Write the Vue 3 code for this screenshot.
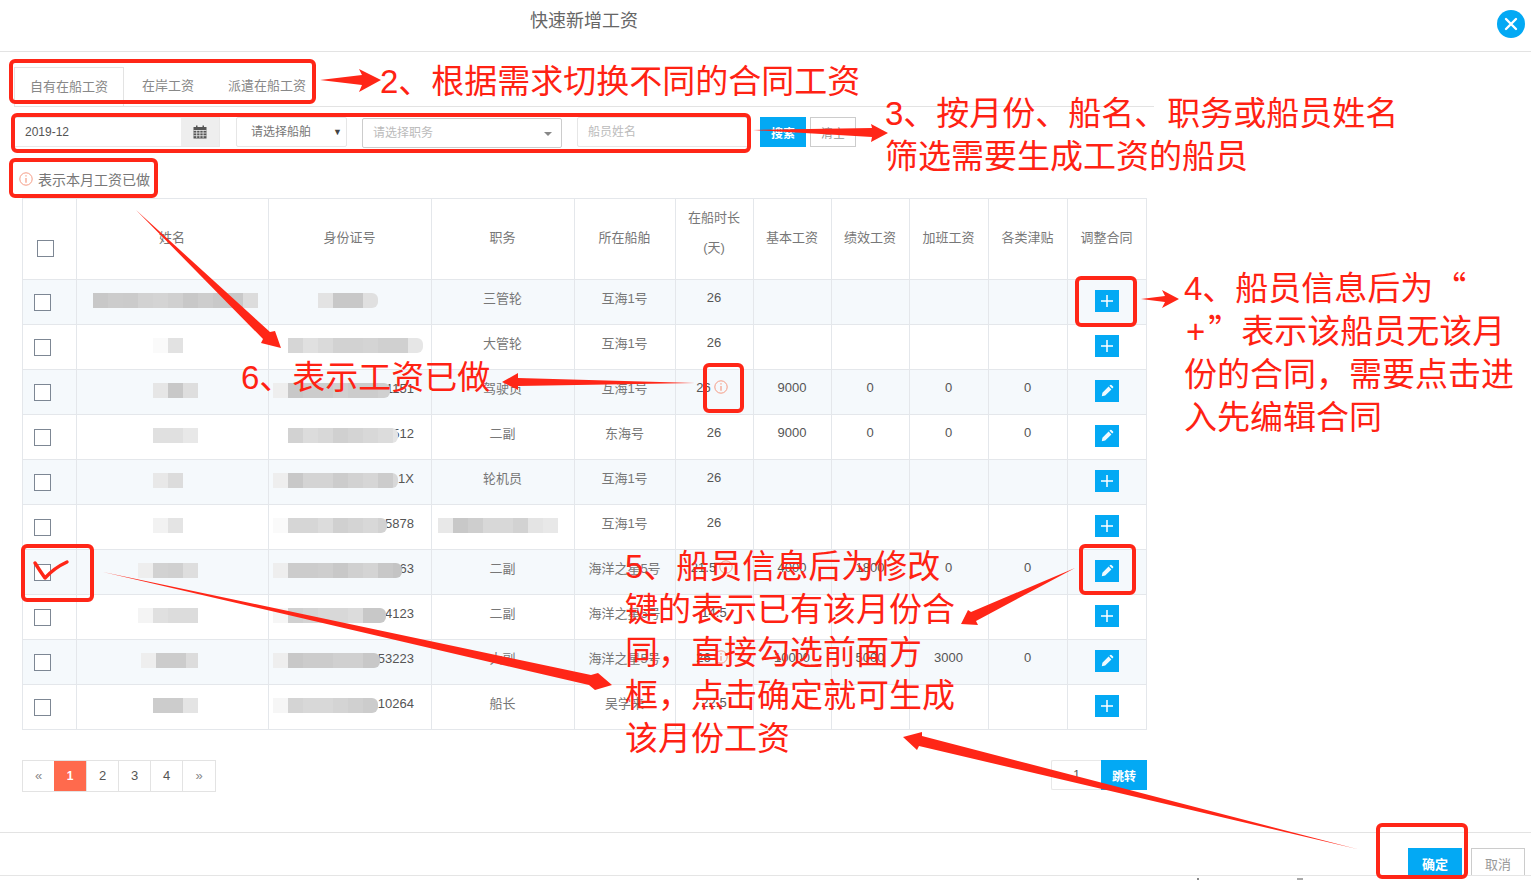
<script setup>
// 灰度马赛克：x 为起点，w 为总宽，g 为每 15px 一格的灰度
const rows = [
  { name: { x: 93, w: 165, g: ['c8','cc','cb','d2','d4','d0','c8','cd','c9','c9','dc'] }, id: { x: 318, w: 60, g: ['e3','c8','c8','e0'] }, job: '三管轮', ship: '互海1号', days: '26', add: true },
  { name: { x: 153, w: 30, g: ['fa','e2'] }, id: { x: 288, w: 135, g: ['d6','e0','da','d2','d2','d4','d0','d0','e6'] }, job: '大管轮', ship: '互海1号', days: '26', add: true },
  { name: { x: 153, w: 45, g: ['e6','c8','de'] }, id: { x: 273, w: 117, g: ['ee','c8','cc','cc','d0','cc','cc','d0'] }, tail: '1151', job: '驾驶员', ship: '互海1号', days: '26', done: true, pay: ['9000','0','0','0'] },
  { name: { x: 153, w: 45, g: ['e0','e0','e8'] }, id: { x: 288, w: 110, g: ['d2','dc','d8','d0','d4','d8','dc','e4'] }, tail: '512', job: '二副', ship: '东海号', days: '26', pay: ['9000','0','0','0'] },
  { name: { x: 153, w: 30, g: ['e8','dc'] }, id: { x: 273, w: 125, g: ['ee','c8','d4','d4','cc','d2','d6','cc','d8'] }, tail: '1X', job: '轮机员', ship: '互海1号', days: '26', add: true },
  { name: { x: 153, w: 30, g: ['f2','e4'] }, id: { x: 273, w: 114, g: ['fa','d6','d6','dc','d0','d4','d8','d2'] }, tail: '5878', job: { x: 438, w: 120, g: ['e8','c8','ce','d8','d8','d2','e4','e8'] }, ship: '互海1号', days: '26', add: true },
  { name: { x: 138, w: 60, g: ['ee','d2','d0','de'] }, id: { x: 273, w: 129, g: ['ee','cc','cc','ce','c8','d0','d4','c8','c4'] }, tail: '63', job: '二副', ship: '海洋之星5号', days: '21.5', done: true, pay: ['4000','1800','0','0'] },
  { name: { x: 138, w: 60, g: ['f4','e0','dc','dc'] }, id: { x: 273, w: 113, g: ['f6','d0','d4','d8','d8','dc','c8','c8'] }, tail: '4123', job: '二副', ship: '海洋之星5号', days: '14.5', add: true },
  { name: { x: 141, w: 57, g: ['ee','cc','cc','dc'] }, id: { x: 273, w: 107, g: ['ee','c8','cc','cc','d0','d0','c8','c8'] }, tail: '53223', job: '大副', ship: '海洋之星5号', days: '26', done: true, pay: ['10000','5000','3000','0'] },
  { name: { x: 153, w: 45, g: ['cc','cc','e4'] }, id: { x: 273, w: 105, g: ['f6','d4','d8','d8','d4','d0','cc','cc'] }, tail: '10264', job: '船长', ship: '吴学来', days: '22.5', add: true }
];

const heads = ['姓名', '身份证号', '职务', '所在船舶'];
const payHeads = ['基本工资', '绩效工资', '加班工资', '各类津贴', '调整合同'];
const widths = [54, 192, 163, 143, 101, 78, 78, 78, 79, 79, 79];
const pages = ['«', '1', '2', '3', '4', '»'];

const notes = [
  { x: 380, y: 60, lines: ['2、根据需求切换不同的合同工资'] },
  { x: 885, y: 92, lines: ['3、按月份、船名、职务或船员姓名', '筛选需要生成工资的船员'] },
  { x: 1184, y: 267, lines: ['4、船员信息后为“', '+”表示该船员无该月', '份的合同，需要点击进', '入先编辑合同'] },
  { x: 625, y: 545, lines: ['5、船员信息后为修改', '键的表示已有该月份合', '同，直接勾选前面方', '框，点击确定就可生成', '该月份工资'] },
  { x: 241, y: 356, lines: ['6、表示工资已做'] }
];

// 引号要用中文字体的全角字形，加号左右留空
const parts = line => line.split(/([“”+])/).filter(Boolean);
const partClass = p => (p === '+' ? 'plus' : p === '“' || p === '”' ? 'quote' : '');

const frames = [
  [11, 61, 303, 41], [13, 115, 736, 36], [11, 160, 145, 36], [1077, 278, 58, 47],
  [705, 365, 37, 46], [1081, 546, 53, 47], [23, 546, 69, 54], [1378, 825, 88, 52]
];

const arrows = [
  '320,80 362,75 359,69 381,80 359,92 362,85',
  '753,130 872,128 871,124 888,133 871,142 872,137',
  '1141,299 1165,296 1162,290 1179,299 1162,308 1165,302',
  '695,383 518,378 518,373 502,382 518,390 518,386',
  '136,210 270,332 275,331 281,348 261,343 263,339',
  '103,572 591,675 598,673 612,685 595,690 589,685',
  '1075,568 971,612 968,610 961,624 978,625 976,621',
  '1357,849 922,736 922,732 903,737 917,750 919,746'
];

const grey = v => '#' + v + v + v;
</script>

<template>
  <div class="page">
    <div class="dialog">
      <header class="head">
        <span class="title">快速新增工资</span>
        <button class="close">
          <svg width="14" height="14" viewBox="0 0 14 14"><path d="M2 2 L12 12 M12 2 L2 12" stroke="#fff" stroke-width="2.4" stroke-linecap="round" /></svg>
        </button>
      </header>

      <div class="tabs">
        <span class="tab active">自有在船工资</span>
        <span class="tab second">在岸工资</span>
        <span class="tab third">派遣在船工资</span>
      </div>

      <div class="filters">
        <div class="date">
          <span class="date-text">2019-12</span>
          <span class="date-btn">
            <svg width="14" height="14" viewBox="0 0 14 14">
              <path d="M0.5 2 H3 V0.5 H4.5 V2 H9.5 V0.5 H11 V2 H13.5 V13.5 H0.5 Z" fill="#555" />
              <path d="M0.5 5.5 H13.5 M0.5 8 H13.5 M0.5 10.7 H13.5 M3.7 5 V13 M6.9 5 V13 M10.1 5 V13" stroke="#eee" stroke-width="0.8" />
            </svg>
          </span>
        </div>
        <div class="select ship">请选择船舶<i class="down">▼</i></div>
        <div class="select job">请选择职务<i class="caret"></i></div>
        <div class="select crew">船员姓名</div>
        <button class="btn primary">搜索</button>
        <button class="btn plain">清空</button>
      </div>

      <div class="legend">
        <svg class="info" width="14" height="14" viewBox="0 0 14 14">
          <circle cx="7" cy="7" r="6.2" fill="none" stroke="#f59b84" />
          <path d="M7 3.2 V4.6 M7 6 V10.8" stroke="#f59b84" stroke-width="1.2" />
        </svg>
        表示本月工资已做
      </div>

      <table class="grid">
        <colgroup>
          <col v-for="(w, i) in widths" :key="i" :style="{ width: w + 'px' }" />
        </colgroup>
        <thead>
          <tr>
            <th class="check-head"><span class="box"></span></th>
            <th v-for="h in heads" :key="h">{{ h }}</th>
            <th><div class="two-line">在船时长<br />(天)</div></th>
            <th v-for="h in payHeads" :key="h">{{ h }}</th>
          </tr>
        </thead>
        <tbody>
          <tr v-for="(row, i) in rows" :key="i" :class="{ stripe: i % 2 === 0 }">
            <td class="check-cell"><span class="box"></span></td>
            <td>
              <div class="blur-line" :style="{ paddingLeft: row.name.x - 77 + 'px' }">
                <span class="mosaic" :style="{ width: row.name.w + 'px' }">
                  <i v-for="(g, n) in row.name.g" :key="n" :style="{ background: grey(g) }"></i>
                </span>
              </div>
            </td>
            <td>
              <div class="blur-line" :style="{ paddingLeft: row.id.x - 269 + 'px' }">
                <span class="mosaic round" :style="{ width: row.id.w + 'px' }">
                  <i v-for="(g, n) in row.id.g" :key="n" :style="{ background: grey(g) }"></i>
                </span>
                <span v-if="row.tail" class="tail">{{ row.tail }}</span>
              </div>
            </td>
            <td>
              <div v-if="row.job.g" class="blur-line" :style="{ paddingLeft: row.job.x - 432 + 'px' }">
                <span class="mosaic" :style="{ width: row.job.w + 'px' }">
                  <i v-for="(g, n) in row.job.g" :key="n" :style="{ background: grey(g) }"></i>
                </span>
              </div>
              <span v-else class="cn">{{ row.job }}</span>
            </td>
            <td><span class="cn">{{ row.ship }}</span></td>
            <td>
              <span class="num">{{ row.days }}</span>
              <svg v-if="row.done" class="info inline" width="14" height="14" viewBox="0 0 14 14">
                <circle cx="7" cy="7" r="6.2" fill="none" stroke="#f59b84" />
                <path d="M7 3.2 V4.6 M7 6 V10.8" stroke="#f59b84" stroke-width="1.2" />
              </svg>
            </td>
            <td v-for="n in 4" :key="n"><span class="num">{{ row.pay ? row.pay[n - 1] : '' }}</span></td>
            <td class="act-cell">
              <button class="act">
                <svg v-if="row.add" width="14" height="14" viewBox="0 0 14 14"><path d="M7 1 V13 M1 7 H13" stroke="#fff" stroke-width="1.5" /></svg>
                <svg v-else width="14" height="14" viewBox="0 0 14 14"><path d="M8.6 2.6 L11.4 5.4 L5.2 11.6 L1.8 12.2 L2.4 8.8 Z M9.4 1.8 L10.3 0.9 Q10.9 0.4 11.5 0.9 L13.1 2.5 Q13.6 3.1 13.1 3.7 L12.2 4.6 Z" fill="#eef9fe" /></svg>
              </button>
            </td>
          </tr>
        </tbody>
      </table>

      <div class="pager">
        <ul class="pages">
          <li v-for="p in pages" :key="p" :class="{ on: p === '1', edge: p === '«' || p === '»' }">{{ p }}</li>
        </ul>
        <div class="jump">
          <span class="jump-input">1</span>
          <button class="jump-btn">跳转</button>
        </div>
      </div>

      <footer class="foot">
        <button class="foot-btn ok">确定</button>
        <button class="foot-btn cancel">取消</button>
      </footer>
    </div>

    <!-- 截图上的红色标注 -->
    <div class="notes">
      <svg class="marks" width="1531" height="880" viewBox="0 0 1531 880">
        <rect v-for="(f, i) in frames" :key="i" :x="f[0]" :y="f[1]" :width="f[2]" :height="f[3]" rx="4" fill="none" stroke="#ff2617" stroke-width="4" />
        <polygon v-for="(a, i) in arrows" :key="i" :points="a" fill="#ff2617" />
        <path d="M35 563 Q40 571 45 578 Q54 568 67 562" fill="none" stroke="#ff2617" stroke-width="3.4" stroke-linecap="round" stroke-linejoin="round" />
        <rect x="1197" y="878" width="2" height="2" fill="#888" />
        <rect x="1297" y="878" width="6" height="2" fill="#aaa" />
      </svg>
      <div v-for="n in notes" :key="n.x" class="note" :style="{ left: n.x + 'px', top: n.y + 'px' }">
        <div v-for="l in n.lines" :key="l"><span v-for="(p, i) in parts(l)" :key="i" :class="partClass(p)">{{ p }}</span></div>
      </div>
    </div>
  </div>
</template>

<style>
html, body {
  margin: 0;
  background: #fff;
  overflow: hidden;
}
</style>

<style scoped>
.page {
  position: relative;
  width: 1531px;
  height: 880px;
  overflow: hidden;
  font-family: "Liberation Sans", "Noto Sans CJK SC", sans-serif;
  font-size: 13px;
  color: #777;
}

.dialog {
  height: 875px;
  overflow: hidden;
  border-bottom: 1px solid #e5e5e5;
}

.head {
  display: flex;
  justify-content: space-between;
  align-items: flex-start;
  height: 51px;
  border-bottom: 1px solid #e3e3e3;
}

.title {
  margin: 9px 0 0 530px;
  font-size: 18px;
  line-height: 24px;
  color: #666;
}

.close {
  display: flex;
  align-items: center;
  justify-content: center;
  width: 28px;
  height: 28px;
  margin: 10px 6px 0 0;
  padding: 0;
  border: none;
  border-radius: 50%;
  background: #03a9f4;
}

.tabs {
  display: flex;
  width: 1140px;
  height: 39px;
  margin: 15px 0 0 14px;
  border-bottom: 1px solid #e3e3e3;
}

.tab {
  height: 39px;
  line-height: 37px;
  box-sizing: border-box;
  color: #888;
}

.active {
  width: 110px;
  padding-left: 15px;
  border: 1px solid #e3e3e3;
  border-bottom: none;
  background: #fff;
}

.second {
  padding-left: 18px;
  width: 104px;
}

.filters {
  display: flex;
  height: 30px;
  margin: 10px 0 0 14px;
  font-size: 12px;
}

.date {
  display: flex;
  width: 206px;
  box-sizing: border-box;
  border: 1px solid #e8e8e8;
  line-height: 28px;
  color: #555;
}

.date-text {
  flex: 1;
  padding-left: 10px;
}

.date-btn {
  display: flex;
  align-items: center;
  justify-content: center;
  width: 38px;
  background: #eee;
}

.select {
  position: relative;
  box-sizing: border-box;
  line-height: 28px;
  border: 1px solid #e6e6e6;
  border-radius: 2px;
  color: #888;
}

.ship {
  width: 111px;
  margin-left: 16px;
  padding-left: 14px;
  color: #777;
}

.job {
  width: 200px;
  margin: 1px 0 -1px 15px;
  padding-left: 10px;
  border-color: #ccc;
  color: #bbb;
}

.crew {
  width: 172px;
  margin-left: 15px;
  padding-left: 10px;
  color: #bbb;
}

.down {
  position: absolute;
  right: 4px;
  top: 0;
  font-style: normal;
  font-size: 9px;
  color: #444;
}

.caret {
  position: absolute;
  right: 9px;
  top: 13px;
  border-left: 4px solid transparent;
  border-right: 4px solid transparent;
  border-top: 4px solid #888;
}

.btn {
  width: 46px;
  height: 30px;
  padding: 0;
  font: inherit;
  font-size: 12px;
}

.primary {
  margin-left: 11px;
  border: none;
  background: #03a9f4;
  color: #fff;
  font-weight: 700;
}

.plain {
  margin-left: 4px;
  border: 1px solid #ccc;
  background: #fff;
  color: #999;
}

.legend {
  display: flex;
  align-items: center;
  gap: 5px;
  height: 51px;
  padding: 12px 0 0 19px;
  box-sizing: border-box;
  font-size: 14px;
  color: #777;
}

.info {
  flex: none;
}

.info.inline {
  margin: 0 4px 0 3px;
  vertical-align: -2px;
}

.grid {
  width: 1125px;
  margin-left: 22px;
  table-layout: fixed;
  border-collapse: collapse;
  border: 1px solid #e4e7eb;
}

.grid th,
.grid td {
  padding: 0 1px 0 0;
  border: 1px solid #e4e7eb;
  text-align: center;
  font-weight: 400;
}

.grid th {
  height: 81px;
  padding-bottom: 6px;
  box-sizing: border-box;
  color: #777;
}

.grid td {
  height: 44px;
}

.grid td.act-cell {
  padding-right: 0;
}

.two-line {
  line-height: 30px;
  padding-bottom: 6px;
}

.stripe td {
  background: #f5f9fc;
}

.box {
  display: block;
  width: 15px;
  height: 15px;
  border: 1px solid #7d8794;
  background: #fff;
}

.check-head .box {
  margin: 25px 0 0 14px;
}

.check-cell .box {
  margin: 0 0 0 11px;
}

.blur-line {
  display: flex;
  align-items: center;
  height: 15px;
  margin-top: -4px;
}

.mosaic {
  position: relative;
  z-index: 1;
  display: flex;
  flex: none;
  height: 15px;
  margin-right: -30px;
  overflow: hidden;
}

.mosaic i {
  flex: none;
  width: 15px;
  height: 15px;
}

.round {
  border-radius: 0 6px 6px 0;
}

.tail {
  flex: none;
  margin-left: auto;
  padding: 0 16px 4px 0;
  color: #555;
  font-size: 13px;
  line-height: 15px;
}

.cn {
  display: inline-block;
  padding-bottom: 9px;
  color: #777;
}

.num {
  display: inline-block;
  padding-bottom: 9px;
  color: #555;
  font-size: 13px;
}

.act {
  display: flex;
  align-items: center;
  justify-content: center;
  width: 24px;
  height: 22px;
  padding: 0;
  margin: -3px auto 0;
  border: none;
  background: #03a9f4;
}

.pager {
  display: flex;
  justify-content: space-between;
  width: 1125px;
  height: 32px;
  margin: 30px 0 0 22px;
}

.pages {
  display: flex;
  margin: 0;
  padding: 0;
  list-style: none;
  border: 1px solid #e3e3e3;
}

.pages li {
  width: 32px;
  box-sizing: border-box;
  line-height: 30px;
  text-align: center;
  border-left: 1px solid #e3e3e3;
  color: #555;
  font-size: 13px;
}

.pages li:first-child {
  border-left: none;
  width: 31px;
}

.pages li:last-child {
  width: 33px;
}

.pages li.edge {
  color: #888;
}

.pages li.on {
  background: #ff6a4d;
  color: #fff;
  font-weight: 700;
  font-size: 12px;
  border-left: none;
}

.jump {
  display: flex;
  height: 30px;
}

.jump-input {
  width: 50px;
  box-sizing: border-box;
  border: 1px solid #e8e8e8;
  border-right: none;
  border-radius: 2px 0 0 2px;
  line-height: 28px;
  text-align: center;
  color: #555;
  font-size: 12px;
}

.jump-btn {
  width: 46px;
  padding: 0;
  border: none;
  background: #03a9f4;
  color: #fff;
  font: inherit;
  font-size: 12px;
  font-weight: 700;
}

.foot {
  display: flex;
  justify-content: flex-end;
  gap: 9px;
  margin-top: 40px;
  padding: 15px 6px 0 0;
  border-top: 1px solid #e3e3e3;
}

.foot-btn {
  flex: none;
  width: 54px;
  height: 34px;
  padding: 0 0 3px;
  font: inherit;
  font-size: 13px;
}

.ok {
  border: none;
  background: #03a9f4;
  color: #fff;
  font-weight: 700;
}

.cancel {
  border: 1px solid #ccc;
  background: #fff;
  color: #999;
}

.notes {
  position: absolute;
  inset: 0;
  z-index: 2;
  pointer-events: none;
}

.marks {
  position: absolute;
  left: 0;
  top: 0;
}

.note {
  position: absolute;
  font-size: 33px;
  line-height: 43px;
  font-weight: 400;
  color: #ff2213;
  white-space: nowrap;
}

.quote {
  font-family: "Noto Sans CJK SC", sans-serif;
  line-height: 0;
}

.plus {
  padding: 0 3px 0 2px;
}
</style>
